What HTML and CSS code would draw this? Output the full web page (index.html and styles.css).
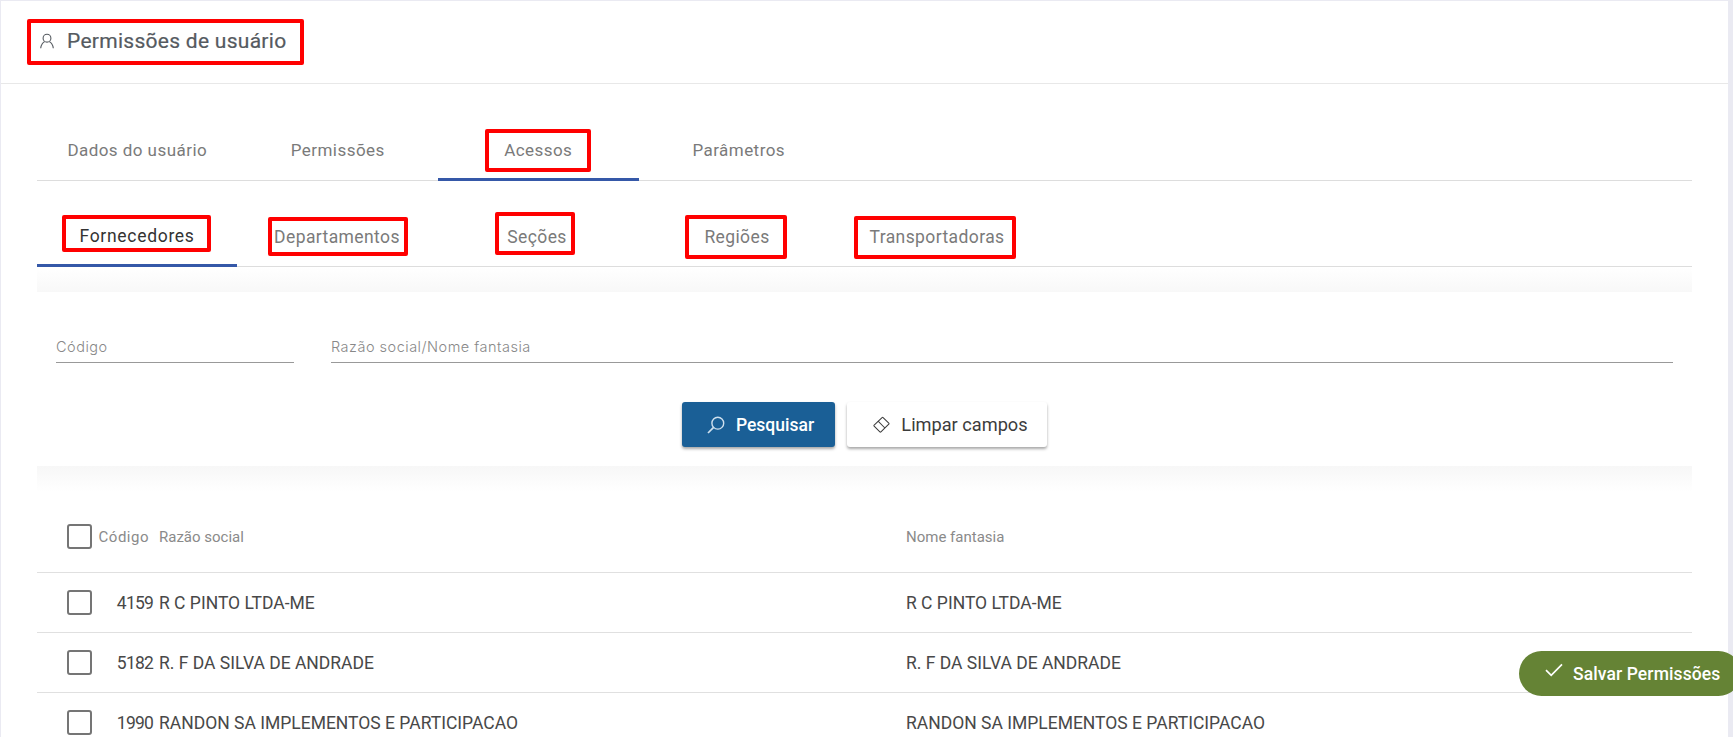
FILE: index.html
```html
<!DOCTYPE html>
<html lang="pt-BR">
<head>
<meta charset="utf-8">
<title>Permissões de usuário</title>
<link rel="stylesheet" href="styles.css">
</head>
<body>
<div class="app">
  <header class="page-head">
    <svg class="user-icon" viewBox="0 0 16 16" width="16" height="16" fill="none" stroke="currentColor" stroke-width="1.1"><circle cx="8" cy="5.2" r="3.9"/><path d="M1.7 15.2c.3-3.6 2.6-6.1 3.9-6.5M14.3 15.2c-.3-3.6-2.6-6.1-3.9-6.5"/></svg>
    <h1 class="page-title">Permissões de usuário</h1>
  </header>
  <main class="content">
    <nav class="tabs tabs-main">
      <a class="tab">Dados do usuário</a>
      <a class="tab">Permissões</a>
      <a class="tab tab-underlined">Acessos</a>
      <a class="tab">Parâmetros</a>
    </nav>
    <nav class="tabs tabs-sub">
      <a class="tab tab-underlined tab-current">Fornecedores</a>
      <a class="tab">Departamentos</a>
      <a class="tab">Seções</a>
      <a class="tab">Regiões</a>
      <a class="tab">Transportadoras</a>
    </nav>
    <div class="fade fade-down"></div>
    <section class="filters">
      <div class="fields">
        <div class="field field-code">Código</div>
        <div class="field field-name">Razão social/Nome fantasia</div>
      </div>
      <div class="actions">
        <button class="btn btn-primary">
          <svg viewBox="0 0 18 18" width="18" height="18" fill="none" stroke="currentColor" stroke-width="1.4"><circle cx="10.8" cy="7.2" r="5.9"/><path d="M6.6 11.4 1 17" stroke-width="1.7"/></svg>
          <span>Pesquisar</span>
        </button>
        <button class="btn btn-light">
          <svg viewBox="0 0 18 18" width="17" height="17" fill="none" stroke="currentColor" stroke-width="1.1"><path d="M1.2 9.6 9.6 1.6a.8.8 0 0 1 1.1 0l6 6a.8.8 0 0 1 0 1.1L8.4 16.8a.8.8 0 0 1-1.1 0l-6.1-6.1a.8.8 0 0 1 0-1.1Z"/><path d="m5.4 5.5 7.2 7.2"/></svg>
          <span>Limpar campos</span>
        </button>
      </div>
    </section>
    <div class="fade fade-up"></div>
    <div class="table">
      <div class="row row-head">
        <span class="check"></span>
        <span class="col-code">Código</span>
        <span class="col-name">Razão social</span>
        <span class="col-alt">Nome fantasia</span>
      </div>
      <div class="row">
        <span class="check"></span>
        <span class="col-code">4159</span>
        <span class="col-name">R C PINTO LTDA-ME</span>
        <span class="col-alt">R C PINTO LTDA-ME</span>
      </div>
      <div class="row">
        <span class="check"></span>
        <span class="col-code">5182</span>
        <span class="col-name">R. F DA SILVA DE ANDRADE</span>
        <span class="col-alt">R. F DA SILVA DE ANDRADE</span>
      </div>
      <div class="row">
        <span class="check"></span>
        <span class="col-code">1990</span>
        <span class="col-name">RANDON SA IMPLEMENTOS E PARTICIPACAO</span>
        <span class="col-alt">RANDON SA IMPLEMENTOS E PARTICIPACAO</span>
      </div>
    </div>
  </main>
</div>
<button class="save-btn">
  <svg viewBox="0 0 18 14" width="18" height="14" fill="none" stroke="currentColor" stroke-width="1.7"><path d="M1 7.2 6.2 12.4 17 1.4"/></svg>
  <span>Salvar Permissões</span>
</button>
<div class="mark mark-title"></div>
<div class="mark mark-acessos"></div>
<div class="mark mark-forn"></div>
<div class="mark mark-dep"></div>
<div class="mark mark-sec"></div>
<div class="mark mark-reg"></div>
<div class="mark mark-trans"></div>
</body>
</html>
```
FILE: styles.css
```css
* { box-sizing: border-box; }
html, body { height: 100%; }
body {
  margin: 0;
  background: #eaeaf2;
  font-family: Roboto, "Liberation Sans", sans-serif;
  overflow: hidden;
}
.app {
  margin: 1px 5px 0 1px;
  height: 736px;
  background: #fff;
  overflow: hidden;
}
.page-head {
  height: 83px;
  border-bottom: 1px solid #e8e8e8;
  display: flex;
  align-items: center;
  padding: 0 0 3px 38px;
  gap: 12px;
  color: #555a60;
}
.user-icon { flex: none; }
.page-title {
  margin: 0;
  font-size: 21px;
  font-weight: 400;
  color: #555a60;
  letter-spacing: .28px;
  -webkit-text-stroke: .2px #555a60;
}
.content { padding: 37px 36px 0 36px; }
.tabs {
  display: flex;
  height: 60px;
  border-bottom: 1px solid #ddd;
}
.tabs-sub { margin-top: 26px; }
.tab {
  width: 200.5px;
  height: 60px;
  display: flex;
  align-items: center;
  justify-content: center;
  padding-bottom: 3px;
  font-size: 17px;
  color: #7a7a7a;
  letter-spacing: .45px;
}
.tabs-sub .tab { width: 200px; padding-bottom: 1px; font-size: 17.5px; letter-spacing: .4px; }
.tabs-sub .tab-current { color: #333; letter-spacing: .7px; padding-bottom: 0; }
.tab-underlined { border-bottom: 3px solid #3558a8; }
.tabs-main .tab-underlined { padding-bottom: 0; }
.fade { height: 25px; }
.fade-down { background: linear-gradient(#fff, #f8f8f8); }
.fade-up { background: linear-gradient(#f7f7f7, #fff); height: 26px; }
.filters { padding: 40px 19px 19px; }
.fields { display: flex; gap: 37px; }
.field {
  height: 31px;
  border-bottom: 1px solid #999;
  font-family: Inter, sans-serif;
  font-weight: 300;
  font-size: 14.5px;
  letter-spacing: .5px;
  color: #888;
  line-height: 29px;
}
.field-code { width: 238px; }
.field-name { flex: 1; }
.actions {
  display: flex;
  justify-content: center;
  gap: 12px;
  margin-top: 39px;
}
.btn {
  height: 45px;
  border: 0;
  border-radius: 3px;
  display: flex;
  align-items: center;
  justify-content: center;
  gap: 11px;
  font-family: inherit;
  font-size: 17.5px;
  font-weight: 500;
  box-shadow: 0 2px 3px rgba(0,0,0,.35);
}
.btn-primary { width: 153px; padding-left: 10px; background: #1a5f96; color: #fff; }
.btn-primary svg { color: #cfe0ee; }
.btn-light { width: 200px; padding-left: 13px; background: #fff; color: #3c3c3c; font-weight: 400; font-size: 18.2px; }
.table { margin-top: 10px; }
.row {
  height: 60px;
  border-bottom: 1px solid #e0e0e0;
  display: flex;
  align-items: center;
  font-size: 17.5px;
  color: #484848;
}
.row-head { height: 71px; padding-bottom: 1px; font-size: 15px; color: #8a8a8a; }
.check {
  width: 25px;
  height: 25px;
  margin-left: 30px;
  border: 2px solid #757575;
  border-radius: 3px;
  flex: none;
}
.col-code { width: 67px; text-align: right; flex: none; padding-right: 6px; letter-spacing: -.8px; }
.row-head .col-code { padding-right: 10px; letter-spacing: .5px; }
.col-name { width: 747px; flex: none; }
.col-alt { flex: 1; }
.save-btn {
  position: fixed;
  left: 1519px;
  top: 651px;
  width: 222px;
  height: 45px;
  border: 0;
  border-radius: 23px;
  background: #658335;
  color: #fff;
  display: flex;
  align-items: center;
  gap: 10px;
  padding: 0 0 0 26px;
  font-family: inherit;
  font-size: 17.5px;
  font-weight: 500;
  letter-spacing: .1px;
}
.save-btn svg { margin-bottom: 8px; flex: none; }
.mark {
  position: absolute;
  border: 4px solid #f00;
  border-radius: 2px;
}
.mark-title { left: 27px; top: 19px; width: 277px; height: 46px; }
.mark-acessos { left: 485px; top: 129px; width: 106px; height: 43px; }
.mark-forn { left: 62px; top: 215px; width: 149px; height: 37px; }
.mark-dep { left: 268px; top: 217px; width: 140px; height: 39px; }
.mark-sec { left: 495px; top: 212px; width: 80px; height: 43px; }
.mark-reg { left: 685px; top: 215px; width: 102px; height: 44px; }
.mark-trans { left: 854px; top: 216px; width: 162px; height: 43px; }
```
